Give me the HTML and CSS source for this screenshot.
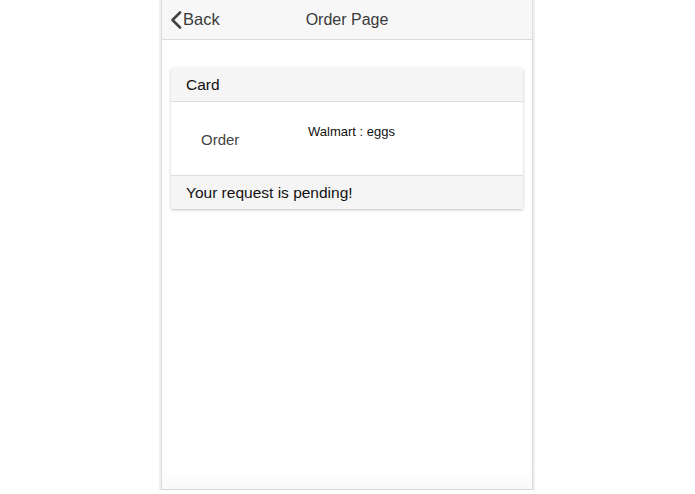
FILE: index.html
```html
<!DOCTYPE html>
<html lang="en">
<head>
  <meta charset="UTF-8">
  <title>Order Page</title>
  <link rel="stylesheet" href="styles.css">
</head>
<body>
<div class="phone">
  <div class="bar-header">
    <a class="back-button">
      <svg class="back-icon" width="12" height="18" viewBox="0 0 12 18">
        <path d="M10 1.5 L2.5 9 L10 16.5" fill="none" stroke="#444" stroke-width="2.6" stroke-linecap="round" stroke-linejoin="round"/>
      </svg>
      <span>Back</span>
    </a>
    <h1 class="title">Order Page</h1>
  </div>

  <div class="content">
    <div class="card">
      <div class="card-header">Card</div>
      <div class="card-body">
        <div class="item-label">Order</div>
        <div class="item-value">Walmart : eggs</div>
      </div>
      <div class="card-footer">Your request is pending!</div>
    </div>
  </div>

  <div class="bottom-fade"></div>
</div>
</body>
</html>
```

FILE: styles.css
```css
body {
  margin: 0;
  background: #fff;
  font-family: "Liberation Sans", Arial, sans-serif;
  color: #444;
}

.phone {
  width: 372px;
  height: 490px;
  margin-left: 161px;
  background: #fff;
  border-left: 1px solid #dcdcdc;
  border-right: 1px solid #dcdcdc;
  border-bottom: 1px solid #d6d6d6;
  box-shadow: 0 0 0 2px #efefef;
  display: flex;
  flex-direction: column;
  box-sizing: border-box;
}

.bar-header {
  height: 40px;
  background: #f7f7f7;
  border-bottom: 1px solid #dadada;
  box-sizing: border-box;
  display: flex;
  align-items: center;
  position: relative;
}

.back-button {
  display: flex;
  align-items: center;
  padding-left: 8px;
  font-size: 16.5px;
  color: #3a3a3a;
  z-index: 1;
}

.back-icon {
  margin-right: 1px;
  margin-top: 1px;
}

.title {
  position: absolute;
  left: 0;
  right: 0;
  margin: 0;
  text-align: center;
  font-size: 16px;
  font-weight: 500;
  color: #3a3a3a;
}

.content {
  flex: 1;
  padding: 28px 9px 0 9px;
}

.card {
  background: #fff;
  box-shadow: 0 1px 3px rgba(0, 0, 0, 0.25);
  border-radius: 2px;
}

.card-header,
.card-footer {
  background: #f5f5f5;
  color: #111;
  font-size: 15.5px;
  padding-left: 15px;
  display: flex;
  align-items: center;
}

.card-header {
  height: 33px;
  border-bottom: 1px solid #dedede;
}

.card-footer {
  height: 33px;
  border-top: 1px solid #dedede;
}

.card-body {
  height: 73px;
  display: flex;
  box-sizing: border-box;
  padding-left: 30px;
}

.item-label {
  width: 107px;
  padding-top: 29px;
  font-size: 15px;
  color: #444;
}

.item-value {
  padding-top: 22px;
  font-size: 13px;
  color: #111;
}

.bottom-fade {
  height: 20px;
  background: linear-gradient(#fff, #f9f9f9);
}
```
